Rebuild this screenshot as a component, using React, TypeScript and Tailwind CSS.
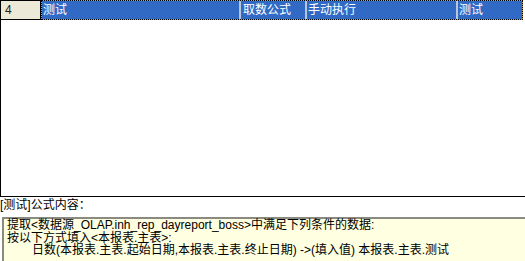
import React from "react";

const font = { fontFamily: '"Liberation Sans", "Noto Sans CJK SC", sans-serif' };

export default function App() {
  return (
    <div className="w-[525px] h-[261px] overflow-hidden bg-white text-black text-[12px]" style={font}>
      {/* Grid */}
      <div className="h-[197px] border-l border-b border-black flex flex-col">
        <div className="h-[20px] flex">
          <div className="w-[41px] h-[20px] -ml-px border border-black bg-[#ECE9D8] text-[#222] pl-[4px] leading-[18px] text-[12px]">
            4
          </div>
          <div className="flex-1 mr-[2px] h-[20px] bg-[#c89a5a] border border-dotted border-black">
            <div className="h-full bg-[#316AC5] flex text-white leading-[18px]">
              <div className="w-[199px] pl-[1px] border-r-2 border-[#b8c4d8]">测试</div>
              <div className="w-[66px] pl-[2px] border-r-2 border-[#b8c4d8]">取数公式</div>
              <div className="w-[151px] pl-[1px] border-r-2 border-[#b8c4d8]">手动执行</div>
              <div className="flex-1 pl-[1px]">测试</div>
            </div>
          </div>
        </div>
      </div>
      {/* Label */}
      <div className="h-[20px] pt-[1px] leading-[14px]">[测试]公式内容：</div>
      {/* Formula box */}
      <div className="ml-[2px] h-[60px] bg-[#FFFFE1] border-t-2 border-l-2 border-t-[#8a8a80] border-l-[#8a8a80] pl-[3px] leading-[12.5px] whitespace-pre">
        <div>提取&lt;数据源_OLAP.inh_rep_dayreport_boss&gt;中满足下列条件的数据:</div>
        <div>按以下方式填入&lt;本报表.主表&gt;:</div>
        <div className="pl-[25px]">日数(本报表.主表.起始日期,本报表.主表.终止日期) -&gt;(填入值) 本报表.主表.测试</div>
      </div>
    </div>
  );
}
